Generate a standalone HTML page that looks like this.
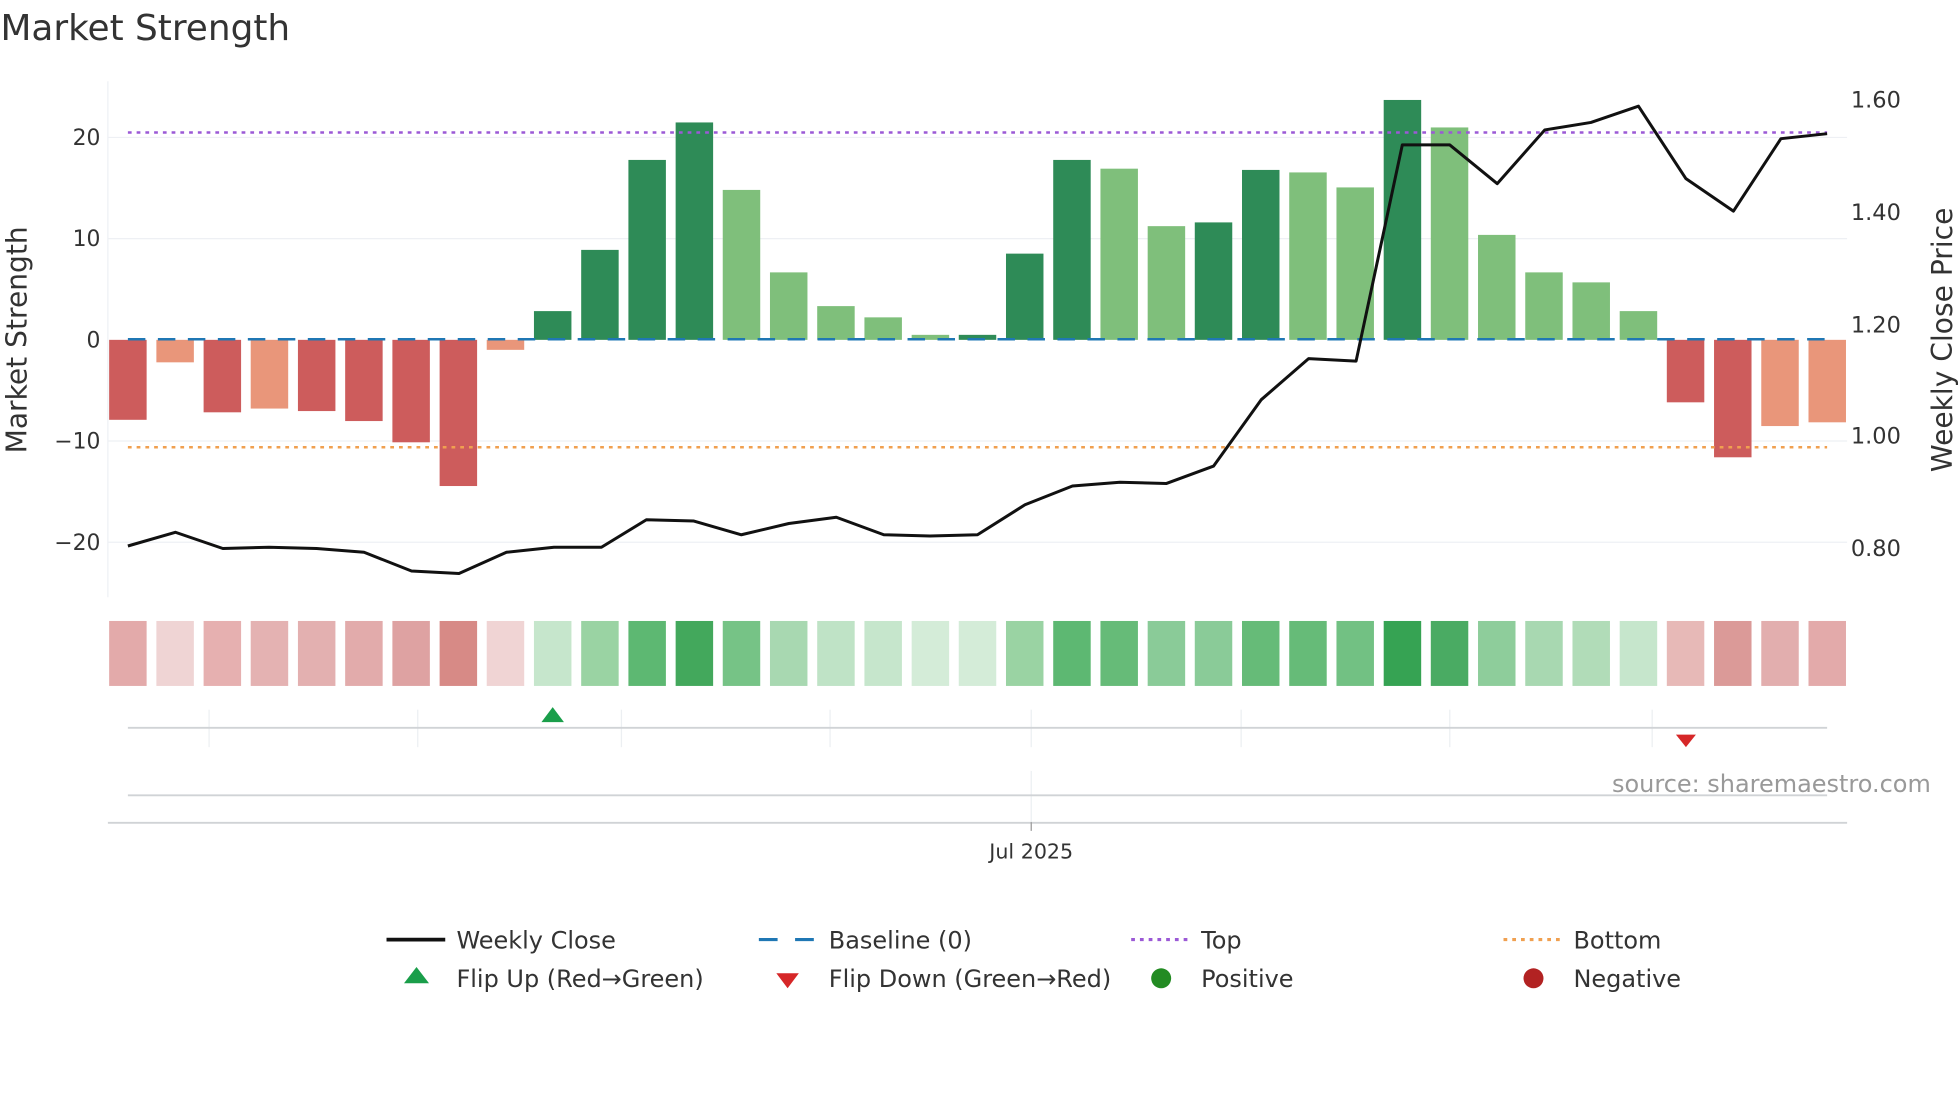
<!DOCTYPE html>
<html><head><meta charset="utf-8"><style>
html,body{margin:0;padding:0;background:#fff;}
svg{display:block;}
text{font-family:"DejaVu Sans","Liberation Sans",sans-serif;fill:#333;}
</style></head><body>
<svg width="1960" height="1102" viewBox="0 0 1568 882" xmlns="http://www.w3.org/2000/svg">
<rect width="1568" height="882" fill="#fff"/>
<text x="0" y="32" font-size="28.7" fill="#333">Market Strength</text>
<g stroke="#eef0f4" stroke-width="1">
<line x1="86" y1="110" x2="1478" y2="110"/><line x1="86" y1="191" x2="1478" y2="191"/>
<line x1="86" y1="353" x2="1478" y2="353"/><line x1="86" y1="434" x2="1478" y2="434"/>
<line x1="86" y1="65" x2="86" y2="478"/>
</g>
<g>
<rect x="87" y="272" width="30" height="64" fill="#cd5c5c"/>
<rect x="124.8" y="272" width="30" height="18" fill="#e9967a"/>
<rect x="162.6" y="272" width="30" height="58" fill="#cd5c5c"/>
<rect x="200.3" y="272" width="30" height="55" fill="#e9967a"/>
<rect x="238.1" y="272" width="30" height="57" fill="#cd5c5c"/>
<rect x="275.9" y="272" width="30" height="65" fill="#cd5c5c"/>
<rect x="313.7" y="272" width="30" height="82" fill="#cd5c5c"/>
<rect x="351.5" y="272" width="30" height="117" fill="#cd5c5c"/>
<rect x="389.2" y="272" width="30" height="8" fill="#e9967a"/>
<rect x="427" y="249" width="30" height="23" fill="#2e8b57"/>
<rect x="464.8" y="200" width="30" height="72" fill="#2e8b57"/>
<rect x="502.6" y="128" width="30" height="144" fill="#2e8b57"/>
<rect x="540.4" y="98" width="30" height="174" fill="#2e8b57"/>
<rect x="578.1" y="152" width="30" height="120" fill="#7fbf7b"/>
<rect x="615.9" y="218" width="30" height="54" fill="#7fbf7b"/>
<rect x="653.7" y="245" width="30" height="27" fill="#7fbf7b"/>
<rect x="691.5" y="254" width="30" height="18" fill="#7fbf7b"/>
<rect x="729.3" y="268" width="30" height="4" fill="#7fbf7b"/>
<rect x="767" y="268" width="30" height="4" fill="#2e8b57"/>
<rect x="804.8" y="203" width="30" height="69" fill="#2e8b57"/>
<rect x="842.6" y="128" width="30" height="144" fill="#2e8b57"/>
<rect x="880.4" y="135" width="30" height="137" fill="#7fbf7b"/>
<rect x="918.2" y="181" width="30" height="91" fill="#7fbf7b"/>
<rect x="955.9" y="178" width="30" height="94" fill="#2e8b57"/>
<rect x="993.7" y="136" width="30" height="136" fill="#2e8b57"/>
<rect x="1031.5" y="138" width="30" height="134" fill="#7fbf7b"/>
<rect x="1069.3" y="150" width="30" height="122" fill="#7fbf7b"/>
<rect x="1107.1" y="80" width="30" height="192" fill="#2e8b57"/>
<rect x="1144.8" y="102" width="30" height="170" fill="#7fbf7b"/>
<rect x="1182.6" y="188" width="30" height="84" fill="#7fbf7b"/>
<rect x="1220.4" y="218" width="30" height="54" fill="#7fbf7b"/>
<rect x="1258.2" y="226" width="30" height="46" fill="#7fbf7b"/>
<rect x="1296" y="249" width="30" height="23" fill="#7fbf7b"/>
<rect x="1333.7" y="272" width="30" height="50" fill="#cd5c5c"/>
<rect x="1371.5" y="272" width="30" height="94" fill="#cd5c5c"/>
<rect x="1409.3" y="272" width="30" height="69" fill="#e9967a"/>
<rect x="1447.1" y="272" width="30" height="66" fill="#e9967a"/>
</g>
<line x1="102" y1="271.5" x2="1462" y2="271.5" stroke="#1f77b4" stroke-width="2" stroke-dasharray="14,10"/>
<line x1="102" y1="106" x2="1462" y2="106" stroke="#9b59d6" stroke-width="2" stroke-dasharray="3,4"/>
<line x1="102" y1="358" x2="1462" y2="358" stroke="#f0a050" stroke-width="2" stroke-dasharray="3,4"/>
<polyline fill="none" stroke="#111" stroke-width="2.4" stroke-linejoin="round" points="102,437 140,426 178,439 215,438 253,439 291,442 329,457 367,459 405,442 443,438 481,438 517,416 555,417 593,428 631,419 669,414 707,428 744,429 782,428 820,404 858,389 896,386 933,387 971,373 1009,320 1047,287 1085,289 1122,116 1160,116 1198,147 1236,104 1273,98 1311,85 1349,143 1387,169 1425,111 1462,107"/>
<g font-size="17.5" text-anchor="end">
<text x="80" y="116">20</text><text x="80" y="197">10</text><text x="80" y="278">0</text>
<text x="80" y="359">−10</text><text x="80" y="440">−20</text>
</g>
<g font-size="18">
<text x="1481" y="86">1.60</text><text x="1481" y="176">1.40</text><text x="1481" y="266">1.20</text>
<text x="1481" y="355">1.00</text><text x="1481" y="445">0.80</text>
</g>
<text transform="translate(21,272) rotate(-90)" font-size="22.5" text-anchor="middle">Market Strength</text>
<text transform="translate(1562,272) rotate(-90)" font-size="22.5" text-anchor="middle">Weekly Close Price</text>
<g>
<rect x="87" y="497" width="30" height="52" fill="#e3aaaa"/>
<rect x="124.8" y="497" width="30" height="52" fill="#efd4d4"/>
<rect x="162.6" y="497" width="30" height="52" fill="#e6b0b0"/>
<rect x="200.3" y="497" width="30" height="52" fill="#e4b2b2"/>
<rect x="238.1" y="497" width="30" height="52" fill="#e3b0b0"/>
<rect x="275.9" y="497" width="30" height="52" fill="#e2abab"/>
<rect x="313.7" y="497" width="30" height="52" fill="#dea2a2"/>
<rect x="351.5" y="497" width="30" height="52" fill="#d78a86"/>
<rect x="389.2" y="497" width="30" height="52" fill="#f0d4d4"/>
<rect x="427" y="497" width="30" height="52" fill="#c6e6cc"/>
<rect x="464.8" y="497" width="30" height="52" fill="#9ad3a3"/>
<rect x="502.6" y="497" width="30" height="52" fill="#5db872"/>
<rect x="540.4" y="497" width="30" height="52" fill="#43a85c"/>
<rect x="578.1" y="497" width="30" height="52" fill="#76c386"/>
<rect x="615.9" y="497" width="30" height="52" fill="#a8d8b1"/>
<rect x="653.7" y="497" width="30" height="52" fill="#bfe3c6"/>
<rect x="691.5" y="497" width="30" height="52" fill="#c6e6cc"/>
<rect x="729.3" y="497" width="30" height="52" fill="#d4ecd8"/>
<rect x="767" y="497" width="30" height="52" fill="#d4ecd8"/>
<rect x="804.8" y="497" width="30" height="52" fill="#9ad3a3"/>
<rect x="842.6" y="497" width="30" height="52" fill="#5db872"/>
<rect x="880.4" y="497" width="30" height="52" fill="#66bb78"/>
<rect x="918.2" y="497" width="30" height="52" fill="#8acb98"/>
<rect x="955.9" y="497" width="30" height="52" fill="#8acb98"/>
<rect x="993.7" y="497" width="30" height="52" fill="#66bb78"/>
<rect x="1031.5" y="497" width="30" height="52" fill="#66bb78"/>
<rect x="1069.3" y="497" width="30" height="52" fill="#72c183"/>
<rect x="1107.1" y="497" width="30" height="52" fill="#36a353"/>
<rect x="1144.8" y="497" width="30" height="52" fill="#4aab63"/>
<rect x="1182.6" y="497" width="30" height="52" fill="#8ecd9b"/>
<rect x="1220.4" y="497" width="30" height="52" fill="#a8d8b1"/>
<rect x="1258.2" y="497" width="30" height="52" fill="#b1dcb8"/>
<rect x="1296" y="497" width="30" height="52" fill="#c6e6cc"/>
<rect x="1333.7" y="497" width="30" height="52" fill="#e7b9b7"/>
<rect x="1371.5" y="497" width="30" height="52" fill="#db9a98"/>
<rect x="1409.3" y="497" width="30" height="52" fill="#e2aeae"/>
<rect x="1447.1" y="497" width="30" height="52" fill="#e3aaaa"/>
</g>
<g stroke="#eceff2" stroke-width="1">
<line x1="167" y1="568" x2="167" y2="598"/><line x1="334" y1="568" x2="334" y2="598"/>
<line x1="497" y1="568" x2="497" y2="598"/><line x1="664" y1="568" x2="664" y2="598"/>
<line x1="825" y1="568" x2="825" y2="598"/><line x1="993" y1="568" x2="993" y2="598"/>
<line x1="1160" y1="568" x2="1160" y2="598"/><line x1="1322" y1="568" x2="1322" y2="598"/>
<line x1="825" y1="617" x2="825" y2="658"/>
</g>
<line x1="102" y1="582.5" x2="1462" y2="582.5" stroke="#d0d3d6" stroke-width="1.5"/>
<polygon points="442,566 451,578 433,578" fill="#1a9e4a"/>
<polygon points="1341,588 1357,588 1349,598" fill="#d62728"/>
<line x1="102" y1="636.5" x2="1462" y2="636.5" stroke="#d0d3d6" stroke-width="1.5"/>
<line x1="86" y1="658.5" x2="1478" y2="658.5" stroke="#d0d3d6" stroke-width="1.5"/>
<line x1="825" y1="658" x2="825" y2="665" stroke="#999" stroke-width="1"/>
<text x="825" y="687" font-size="16.5" text-anchor="middle">Jul 2025</text>
<text x="1545" y="634" font-size="19.2" text-anchor="end" style="fill:#999">source: sharemaestro.com</text>
<line x1="309" y1="752" x2="356" y2="752" stroke="#111" stroke-width="3"/>
<line x1="607" y1="752" x2="622" y2="752" stroke="#1f77b4" stroke-width="2.5"/>
<line x1="636" y1="752" x2="651" y2="752" stroke="#1f77b4" stroke-width="2.5"/>
<line x1="905" y1="752" x2="950" y2="752" stroke="#9b59d6" stroke-width="2.5" stroke-dasharray="3,4"/>
<line x1="1203" y1="752" x2="1248" y2="752" stroke="#f0a050" stroke-width="2.5" stroke-dasharray="3,4"/>
<polygon points="333,774 343,787 323,787" fill="#1a9e4a"/>
<polygon points="621,779 639,779 630,791" fill="#d62728"/>
<circle cx="929" cy="783" r="8" fill="#228b22"/>
<circle cx="1227" cy="783" r="8" fill="#b22222"/>
<g font-size="19.2">
<text x="365" y="759">Weekly Close</text><text x="663" y="759">Baseline (0)</text>
<text x="961" y="759">Top</text><text x="1259" y="759">Bottom</text>
<text x="365" y="790">Flip Up (Red→Green)</text><text x="663" y="790">Flip Down (Green→Red)</text>
<text x="961" y="790">Positive</text><text x="1259" y="790">Negative</text>
</g>
</svg>
</body></html>
